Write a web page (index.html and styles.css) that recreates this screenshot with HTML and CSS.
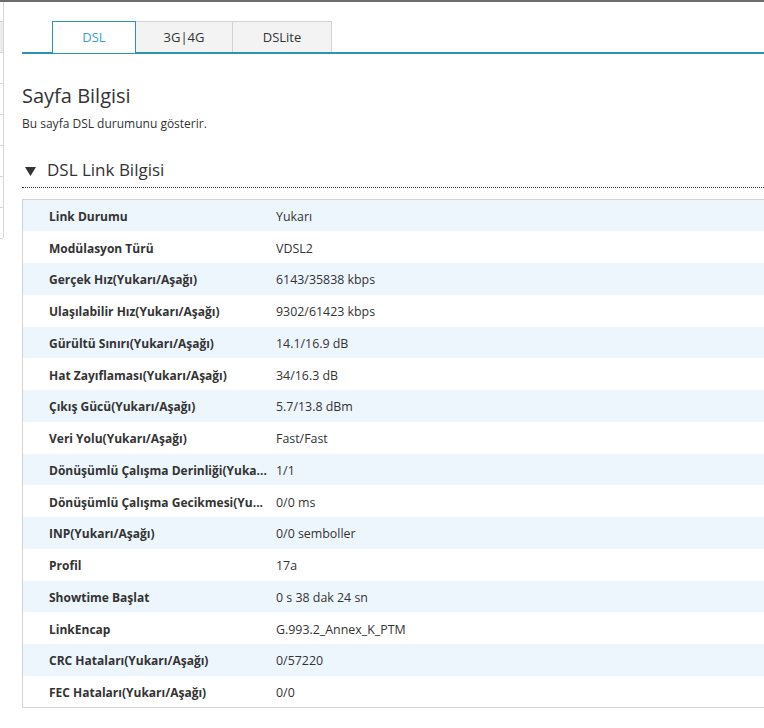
FILE: index.html
```html
<!DOCTYPE html>
<html lang="tr">
<head>
    <meta charset="UTF-8">
    <meta name="viewport" content="width=device-width, initial-scale=1.0">
    <title>DSL Durumu</title>
    <link rel="stylesheet" href="styles.css">
</head>
<body>

<div class="topbar"></div>

<div class="layout">
    <aside class="side-menu">
        <ul>
            <li class="selected"></li>
            <li></li>
            <li></li>
            <li></li>
            <li></li>
            <li></li>
            <li></li>
        </ul>
    </aside>

    <main>
        <ul class="tabs">
            <li class="active">DSL</li>
            <li>3G|4G</li>
            <li>DSLite</li>
        </ul>

        <section class="page-info">
            <h1>Sayfa Bilgisi</h1>
            <p>Bu sayfa DSL durumunu gösterir.</p>
        </section>

        <section class="group">
            <h2 class="group-title">
                <svg class="arrow" width="11" height="10" viewBox="0 0 11 10"><polygon points="0,1 11,1 5.5,10" fill="#333"/></svg>
                DSL Link Bilgisi
            </h2>

            <table class="info-table">
                <tr><th><span>Link Durumu</span></th><td>Yukarı</td></tr>
                <tr><th><span>Modülasyon Türü</span></th><td>VDSL2</td></tr>
                <tr><th><span>Gerçek Hız(Yukarı/Aşağı)</span></th><td>6143/35838 kbps</td></tr>
                <tr><th><span>Ulaşılabilir Hız(Yukarı/Aşağı)</span></th><td>9302/61423 kbps</td></tr>
                <tr><th><span>Gürültü Sınırı(Yukarı/Aşağı)</span></th><td>14.1/16.9 dB</td></tr>
                <tr><th><span>Hat Zayıflaması(Yukarı/Aşağı)</span></th><td>34/16.3 dB</td></tr>
                <tr><th><span>Çıkış Gücü(Yukarı/Aşağı)</span></th><td>5.7/13.8 dBm</td></tr>
                <tr><th><span>Veri Yolu(Yukarı/Aşağı)</span></th><td>Fast/Fast</td></tr>
                <tr><th><span>Dönüşümlü Çalışma Derinliği(Yuka...</span></th><td>1/1</td></tr>
                <tr><th><span>Dönüşümlü Çalışma Gecikmesi(Yu...</span></th><td>0/0 ms</td></tr>
                <tr><th><span>INP(Yukarı/Aşağı)</span></th><td>0/0 semboller</td></tr>
                <tr><th><span>Profil</span></th><td>17a</td></tr>
                <tr><th><span>Showtime Başlat</span></th><td>0 s 38 dak 24 sn</td></tr>
                <tr><th><span>LinkEncap</span></th><td>G.993.2_Annex_K_PTM</td></tr>
                <tr><th><span>CRC Hataları(Yukarı/Aşağı)</span></th><td>0/57220</td></tr>
                <tr><th><span>FEC Hataları(Yukarı/Aşağı)</span></th><td>0/0</td></tr>
            </table>
        </section>
    </main>
</div>

</body>
</html>
```

FILE: styles.css
```css
/* Base page */
body {
    font-family: "Open Sans", "Noto Sans", Arial, sans-serif;
    font-size: 13px;
    color: #333;
    margin: 0;
    padding: 0;
    background: #fff;
    overflow: hidden;
}

.topbar {
    height: 2px;
    background-color: #6e6e6e;
}

.layout {
    display: flex;
}

/* Left menu, mostly scrolled out of view */
.side-menu {
    width: 3px;
    flex-shrink: 0;
    border-right: 1px solid #d6d6d6;
    height: 236px;
}

.side-menu ul {
    list-style: none;
    margin: 19px 0 0;
    padding: 0;
    border-top: 1px solid #d6d6d6;
}

.side-menu li {
    height: 30px;
    border-bottom: 1px solid #d6d6d6;
}

.side-menu li.selected {
    background-color: #ececec;
}

main {
    flex: 1;
    min-width: 800px;
    padding: 19px 0 0 18px;
}

/* Tabs */
.tabs {
    list-style: none;
    margin: 0;
    padding: 0 0 0 30px;
    display: flex;
    border-bottom: 2px solid #2e93b3;
}

.tabs li {
    width: 82px;
    height: 30px;
    line-height: 30px;
    text-align: center;
    background-color: #f3f3f3;
    border: 1px solid #d3d3d3;
    border-bottom: none;
}

.tabs li + li {
    border-left: none;
    width: 96px;
}

.tabs li:last-child {
    width: 98px;
}

.tabs li.active {
    background-color: #fff;
    color: #3a9fc8;
    border-color: #2e93b3;
    height: 31px;
    margin-bottom: -2px;
}

/* Page header */
.page-info {
    padding-top: 28px;
}

.page-info h1 {
    font-size: 20px;
    font-weight: normal;
    margin: 0;
    line-height: 28px;
}

.page-info p {
    font-size: 12px;
    margin: 5px 0 0;
}

/* Group with table */
.group {
    margin-top: 25px;
}

.group-title {
    font-size: 17px;
    font-weight: normal;
    margin: 0;
    padding: 0 0 4px 3px;
    border-bottom: 1px dotted #333;
    display: flex;
    align-items: center;
    gap: 11px;
    line-height: 26px;
}

.group-title .arrow {
    margin-top: 1px;
}

.info-table {
    margin-top: 11px;
    width: 100%;
    border-collapse: collapse;
    table-layout: fixed;
    border: 1px solid #d3d3d3;
    font-size: 12.4px;
}

.info-table tr {
    height: 31.75px;
}

.info-table tr:nth-child(odd) {
    background-color: #eef6fd;
}

.info-table th {
    width: 220px;
    padding: 2px 7px 0 26px;
    text-align: left;
    font-size: 12px;
    font-weight: bold;
    white-space: nowrap;
}

.info-table td {
    padding: 2px 0 0;
}
```
